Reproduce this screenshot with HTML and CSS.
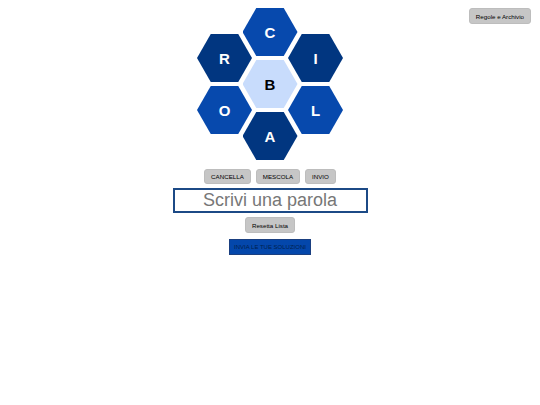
FILE: index.html
```html
<!DOCTYPE html>
<html lang="it">
<head>
<meta charset="utf-8">
<title>Alveare</title>
<link rel="stylesheet" href="styles.css">
</head>
<body>
<button class="btn rules">Regole e Archivio</button>
<main class="game">
  <div class="hive">
    <div class="col col-side">
      <div class="hex dark">R</div>
      <div class="hex mid">O</div>
    </div>
    <div class="col col-center">
      <div class="hex mid">C</div>
      <div class="hex center">B</div>
      <div class="hex dark">A</div>
    </div>
    <div class="col col-side">
      <div class="hex dark">I</div>
      <div class="hex mid">L</div>
    </div>
  </div>
  <div class="controls">
    <button class="btn">CANCELLA</button>
    <button class="btn">MESCOLA</button>
    <button class="btn">INVIO</button>
  </div>
  <input class="word" type="text" placeholder="Scrivi una parola">
  <button class="btn reset">Resetta Lista</button>
  <button class="submit">INVIA LE TUE SOLUZIONI</button>
</main>
</body>
</html>
```
FILE: styles.css
```css
html, body {
  margin: 0;
  padding: 0;
  background: #ffffff;
}
body {
  padding-top: 8px;
  font-family: "Liberation Sans", Arial, sans-serif;
  position: relative;
  min-height: 397px;
}
.game {
  display: flex;
  flex-direction: column;
  align-items: center;
}
.hive {
  display: flex;
  width: 146px;
  height: 152px;
}
.col {
  display: flex;
  flex-direction: column;
  gap: 4px;
  width: 55px;
  flex: none;
}
.col + .col {
  margin-left: -9.5px;
}
.col-side {
  padding-top: 26px;
}
.hex {
  width: 55px;
  height: 48px;
  clip-path: polygon(25% 0, 75% 0, 100% 50%, 75% 100%, 25% 100%, 0 50%);
  display: flex;
  align-items: center;
  justify-content: center;
  color: #ffffff;
  font-weight: bold;
  font-size: 15px;
}
.dark { background: #013680; }
.mid { background: #0749ad; }
.center {
  background: #c8dcfc;
  color: #000000;
}
.controls {
  display: flex;
  gap: 5px;
  margin-top: 9px;
}
.btn {
  font-family: "Liberation Sans", Arial, sans-serif;
  font-size: 6.2px;
  color: #000000;
  background: #c6c6c6;
  border: 1px solid #bdbdbd;
  border-radius: 3px;
  height: 15px;
  padding: 0 6px;
  margin: 0;
  line-height: 13px;
}
.rules {
  position: absolute;
  top: 8px;
  right: 9px;
  height: 16px;
}
.word {
  box-sizing: border-box;
  width: 195px;
  height: 25px;
  margin-top: 4px;
  border: 2px solid #1c4a86;
  padding: 0;
  text-align: center;
  font-family: "Liberation Sans", Arial, sans-serif;
  font-size: 18px;
  color: #333;
  outline: none;
}
.word::placeholder {
  color: #777777;
}
.reset {
  margin-top: 4px;
  height: 16px;
}
.submit {
  margin-top: 6px;
  background: #0447ab;
  color: #00214f;
  border: 1px solid #1a3f80;
  height: 16px;
  padding: 0 4px;
  font-family: "Liberation Sans", Arial, sans-serif;
  font-size: 6px;
  line-height: 14px;
}
```
